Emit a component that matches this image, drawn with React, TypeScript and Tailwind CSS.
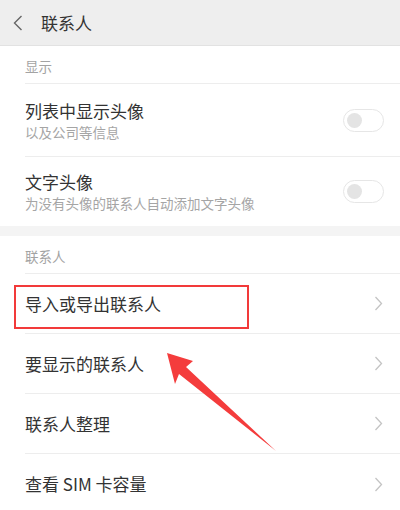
import React from "react";

const FONT = { fontFamily: "'Noto Sans CJK SC', 'Noto Sans', sans-serif" };

function Toggle() {
  return (
    <div className="w-[41px] h-[23px] rounded-full border border-[#e6e6e6] bg-white flex items-center px-[3px] shrink-0">
      <div className="w-[15px] h-[15px] rounded-full bg-[#e4e4e4]" />
    </div>
  );
}

function Chevron() {
  return (
    <svg width="9" height="15" viewBox="0 0 9 15" className="shrink-0">
      <path d="M1.5 1 L7.5 7.5 L1.5 14" fill="none" stroke="#c4c4c4" strokeWidth="1.3" />
    </svg>
  );
}

function SectionLabel({ text }: { text: string }) {
  return (
    <div className="ml-[25px] h-[38px] pt-[3px] flex items-center border-b border-[#ededed] text-[13.5px] text-[#a3a3a3]">
      {text}
    </div>
  );
}

function SwitchRow({ title, sub, h, last }: { title: string; sub: string; h: string; last?: boolean }) {
  return (
    <div className={`ml-[25px] ${h} flex items-center justify-between pr-[16px] ${last ? "" : "border-b border-[#ededed]"}`}>
      <div className="flex flex-col gap-[1px]">
        <span className="text-[17px] leading-[22px] text-[#333333]">{title}</span>
        <span className="text-[13.5px] leading-[18px] text-[#a5a5a5]">{sub}</span>
      </div>
      <Toggle />
    </div>
  );
}

function LinkRow({ title, boxed, last }: { title: string; boxed?: boolean; last?: boolean }) {
  return (
    <div className="relative">
      <div className={`ml-[25px] h-[60px] flex items-center justify-between pr-[17px] ${last ? "" : "border-b border-[#ededed]"}`}>
        <span className="text-[17px] text-[#333333]">{title}</span>
        <Chevron />
      </div>
      {boxed && (
        <div className="absolute left-[14px] top-[11px] w-[235px] h-[44px] border-[2.5px] border-[#f23a3a]" />
      )}
    </div>
  );
}

export default function App() {
  return (
    <div className="relative w-[400px] h-[510px] overflow-hidden bg-white" style={FONT}>
      <div className="h-[46px] bg-[#eeeeee] border-b border-[#e2e2e2] flex items-center">
        <svg width="10" height="16" viewBox="0 0 10 16" className="ml-[13px]">
          <path d="M8.5 1 L1.5 8 L8.5 15" fill="none" stroke="#666666" strokeWidth="1.4" />
        </svg>
        <span className="ml-[18px] text-[17px] text-[#333333]">联系人</span>
      </div>

      <SectionLabel text="显示" />
      <SwitchRow title="列表中显示头像" sub="以及公司等信息" h="h-[73px]" />
      <SwitchRow title="文字头像" sub="为没有头像的联系人自动添加文字头像" h="h-[69px]" last />

      <div className="h-[10px] bg-[#f4f4f4]" />

      <SectionLabel text="联系人" />
      <LinkRow title="导入或导出联系人" boxed />
      <LinkRow title="要显示的联系人" />
      <LinkRow title="联系人整理" />
      <LinkRow title="查看 SIM 卡容量" last />

      <svg className="absolute left-0 top-0 pointer-events-none" width="400" height="510" viewBox="0 0 400 510">
        <polygon points="167,353 193,361 186,367 276,451 179,374 175,384" fill="#f43c3c" />
      </svg>
    </div>
  );
}
